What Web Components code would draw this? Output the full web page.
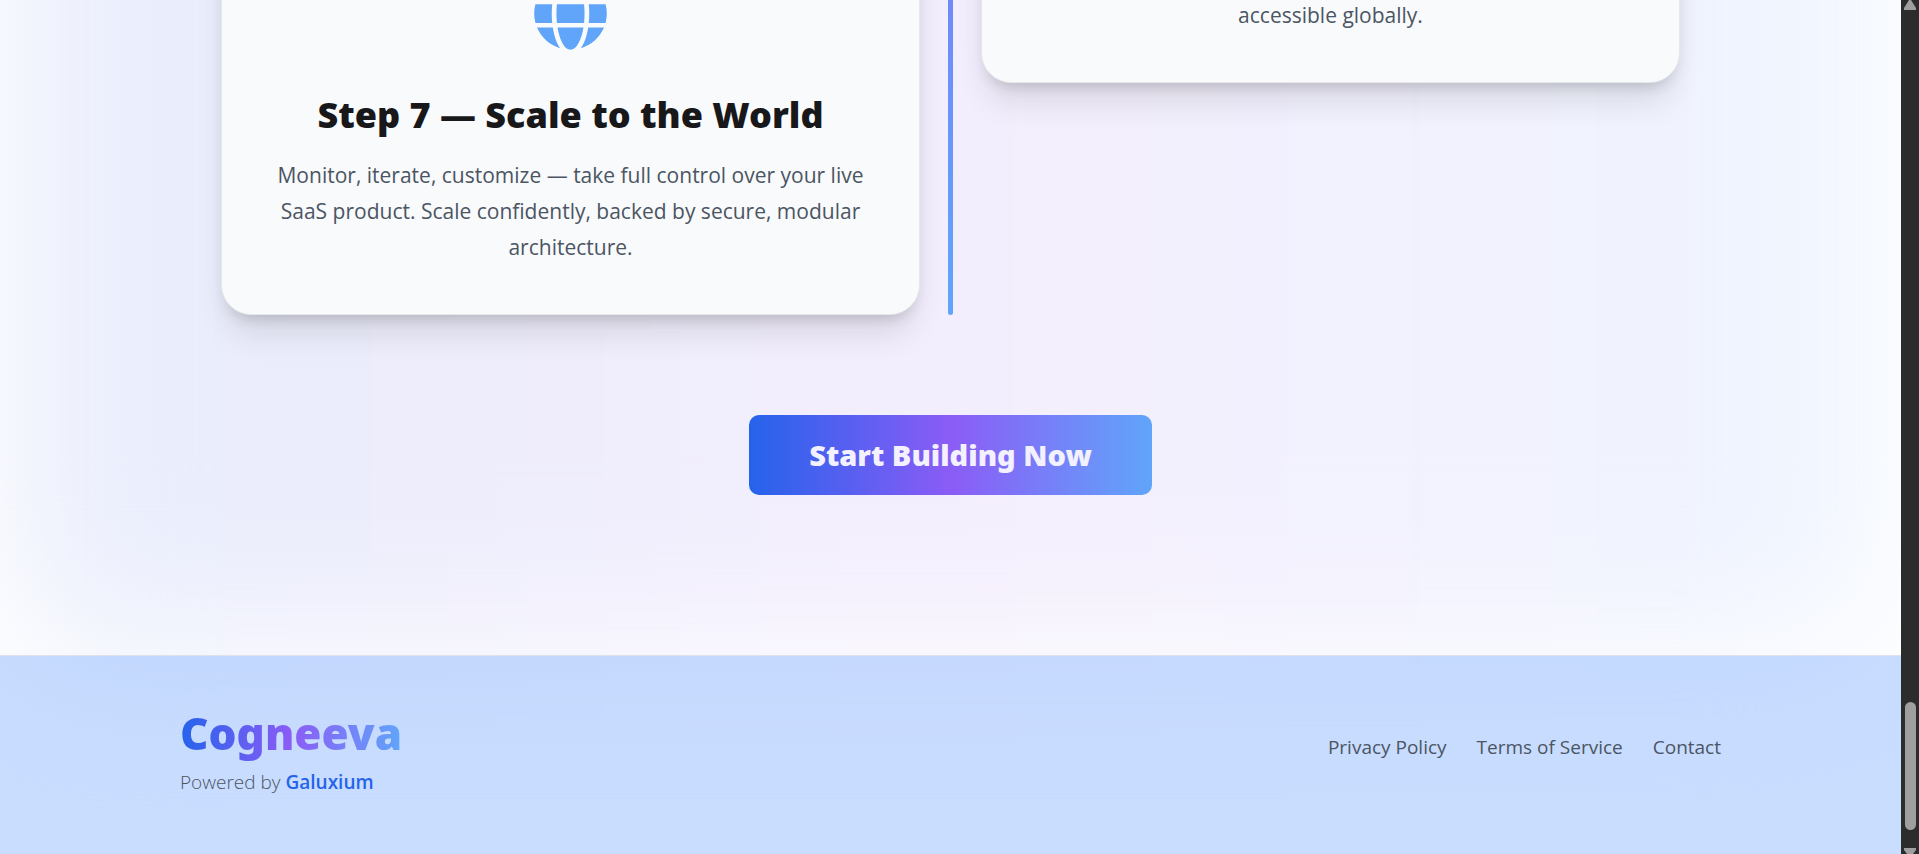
<!DOCTYPE html>
<html lang="en">
<head>
<meta charset="utf-8">
<title>Cogneeva</title>
<style>
    html,
    body {
        margin: 0;
        height: 100%;
        overflow: hidden;
    }

    body {
        --brand: linear-gradient(to right, #2563eb, #8b5cf6, #60a5fa);
        font-family: "Open Sans", "Noto Sans", sans-serif;
        color: #4b5563;
        background: #fff;
    }
</style>
</head>
<body>
<app-shell>
    <step-timeline>
        <step-card slot="left">
            <globe-icon slot="icon"></globe-icon>
            <span slot="title">Step 7 — Scale to the World</span>
            Monitor, iterate, customize — take full control over your live SaaS product. Scale confidently, backed by secure, modular architecture.
        </step-card>
        <step-card slot="right">accessible globally.</step-card>
    </step-timeline>
    <cta-button>Start Building Now</cta-button>
    <site-footer slot="footer">
        <span slot="brand">Cogneeva</span>
        <a slot="links" href="#privacy">Privacy Policy</a>
        <a slot="links" href="#terms">Terms of Service</a>
        <a slot="links" href="#contact">Contact</a>
    </site-footer>
    <scroll-rail slot="rail"></scroll-rail>
</app-shell>

<script>
    function define(name, html) {
        const template = document.createElement('template');
        template.innerHTML = html;
        customElements.define(name, class extends HTMLElement {
            constructor() {
                super();
                const shadowRoot = this.attachShadow({ mode: 'open' });
                shadowRoot.appendChild(template.content.cloneNode(true));
            }
        });
    }

    define('app-shell', `
        <style>
            :host {
                display: flex;
                height: 100vh;
                overflow: hidden;
            }

            .page {
                position: relative;
                z-index: 0;
                flex: 1;
                min-width: 0;
                display: flex;
                flex-direction: column;
                overflow: hidden;
            }

            /* soft colour glow behind the whole page */
            .glow {
                position: absolute;
                z-index: -1;
                inset: -400px 20px 200px;
                border-radius: 60px;
                background: linear-gradient(to right, #e8edfc, #f4eefd, #eff5ff);
                filter: blur(80px);
            }

            main {
                flex: 1;
                min-height: 0;
                display: flex;
                flex-direction: column;
                align-items: center;
                gap: 100px;
            }
        </style>
        <div class="page">
            <div class="glow"></div>
            <main><slot></slot></main>
            <slot name="footer"></slot>
        </div>
        <slot name="rail"></slot>
    `);

    define('step-timeline', `
        <style>
            /* the cards grow upwards from the bottom edge, past the top of the view */
            :host {
                display: grid;
                grid-template-columns: 1fr 5px 1fr;
                grid-template-rows: 315px;
                column-gap: 28px;
                align-items: end;
                width: calc(100% - 442px);
                flex: none;
            }

            .line {
                height: 460px;
                border-radius: 4px;
                background: linear-gradient(to bottom, #8b5cf6 -400px, #60a5fa);
            }

            .right {
                padding-bottom: 232px;
            }
        </style>
        <slot name="left"></slot>
        <div class="line"></div>
        <div class="right"><slot name="right"></slot></div>
    `);

    define('step-card', `
        <style>
            :host {
                display: flex;
                flex-direction: column;
                justify-content: flex-end;
                align-items: center;
                box-sizing: border-box;
                min-height: 260px;
                padding: 50px 50px 49px;
                border: 1px solid #e5e7eb;
                border-radius: 30px;
                background: #f9fafb;
                box-shadow: 0 25px 32px -6px rgba(0, 0, 0, .1), 0 10px 14px -7px rgba(0, 0, 0, .14), 0 0 24px rgba(0, 0, 0, .03);
                text-align: center;
            }

            h3 {
                margin: 0;
                font: 900 36px/44px "Noto Sans", sans-serif;
                color: #18181b;
                white-space: nowrap;
            }

            h3 ::slotted(*) {
                display: block;
                margin: 42px 0 20px;
            }

            p {
                margin: 0;
                font-size: 21px;
                line-height: 36px;
            }
        </style>
        <slot name="icon"></slot>
        <h3><slot name="title"></slot></h3>
        <p><slot></slot></p>
    `);

    define('globe-icon', `
        <style>
            :host {
                display: block;
                width: 75px;
                height: 75px;
                color: #60a5fa;
            }

            svg {
                display: block;
                width: 100%;
                height: 100%;
            }
        </style>
        <svg viewBox="0 0 496 512" fill="currentColor" aria-hidden="true">
            <path d="M336.5 160C322 70.7 287.8 8 248 8s-74 62.7-88.5 152h177zM152 256c0 22.2 1.2 43.5 3.3 64h185.3c2.1-20.5 3.3-41.8 3.3-64s-1.2-43.5-3.3-64H155.3c-2.1 20.5-3.3 41.8-3.3 64zm324.7-96c-28.6-67.9-86.5-120.4-158-141.6 24.4 33.8 41.2 84.7 50 141.6h108zM177.2 18.4C105.8 39.6 47.8 92.1 19.3 160h108c8.7-56.9 25.5-107.8 49.9-141.6zM487.4 192H372.7c2.1 21 3.3 42.5 3.3 64s-1.2 43-3.3 64h114.6c5.5-20.5 8.6-41.8 8.6-64s-3.1-43.5-8.5-64zM120 256c0-21.5 1.2-43 3.3-64H8.6C3.2 212.5 0 233.8 0 256s3.2 43.5 8.6 64h114.6c-2-21-3.2-42.5-3.2-64zm39.5 96c14.5 89.3 48.7 152 88.5 152s74-62.7 88.5-152h-177zm159.3 141.6c71.4-21.2 129.4-73.7 158-141.6h-108c-8.8 56.9-25.6 107.8-50 141.6zM19.3 352c28.6 67.9 86.5 120.4 157.9 141.6-24.4-33.8-41.2-84.7-49.9-141.6h-108z"/>
        </svg>
    `);

    define('cta-button', `
        <style>
            :host {
                display: block;
            }

            button {
                display: block;
                height: 80px;
                padding: 0 60px;
                border: 0;
                border-radius: 10px;
                background: var(--brand);
                color: #f3f0ff;
                font: 900 29px/40px "Noto Sans", sans-serif;
                cursor: pointer;
            }
        </style>
        <button type="button"><slot></slot></button>
    `);

    define('site-footer', `
        <style>
            :host {
                display: flex;
                justify-content: space-between;
                align-items: center;
                box-sizing: border-box;
                height: 199px;
                padding: 0 180px 16px;
                border-top: 1px solid #dde2ec;
                background: rgba(96, 155, 255, .34);
                background-clip: padding-box;
            }

            .about {
                padding-top: 6px;
            }

            .brand {
                width: fit-content;
                background: var(--brand);
                -webkit-background-clip: text;
                background-clip: text;
                color: transparent;
                font: 900 44px/60px "Noto Sans", sans-serif;
            }

            p {
                margin: 3px 0 0;
                font-size: 19px;
                font-weight: 300;
                line-height: 32px;
            }

            a,
            ::slotted(a) {
                text-decoration: none;
            }

            p a {
                color: #2563eb;
                font-weight: 600;
            }

            nav {
                display: flex;
                gap: 30px;
                font-size: 19px;
                line-height: 30px;
            }

            nav ::slotted(a) {
                color: inherit;
            }
        </style>
        <div class="about">
            <div class="brand"><slot name="brand"></slot></div>
            <p>Powered by <a href="#galuxium">Galuxium</a></p>
        </div>
        <nav><slot name="links"></slot></nav>
    `);

    define('scroll-rail', `
        <style>
            :host {
                display: flex;
                flex-direction: column;
                align-items: center;
                box-sizing: border-box;
                width: 18px;
                height: 100%;
                overflow: hidden;
                background: #2c2c2c;
            }

            svg {
                flex: none;
                fill: #9f9f9f;
            }

            .thumb {
                flex: none;
                width: 11px;
                height: 128px;
                margin: auto 0 18px;
                border-radius: 6px;
                background: #9f9f9f;
            }
        </style>
        <svg width="12" height="10"><path d="M5 0h2l5 8v2H0V8z"/></svg>
        <div class="thumb"></div>
        <svg width="12" height="6"><path d="M0 0h12v2l-3 4H3L0 2z"/></svg>
    `);
</script>
</body>
</html>
